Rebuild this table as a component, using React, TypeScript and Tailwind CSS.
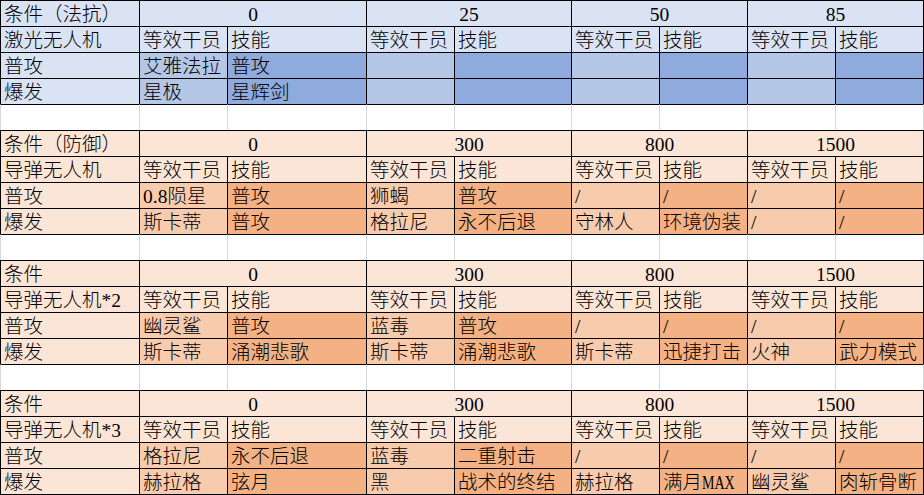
import React from "react";

type Theme = { l: string; m: string; d: string };

const BLUE: Theme = { l: "bg-[#dae3f3]", m: "bg-[#b4c7e7]", d: "bg-[#8faadc]" };
const ORANGE: Theme = { l: "bg-[#fbe5d6]", m: "bg-[#f8cbad]", d: "bg-[#f4b183]" };

type Block = {
  theme: Theme;
  title: string;
  thresholds: string[];
  unit: string;
  normal: string[];
  burst: string[];
};

const blocks: Block[] = [
  {
    theme: BLUE,
    title: "条件（法抗）",
    thresholds: ["0", "25", "50", "85"],
    unit: "激光无人机",
    normal: ["艾雅法拉", "普攻", "", "", "", "", "", ""],
    burst: ["星极", "星辉剑", "", "", "", "", "", ""],
  },
  {
    theme: ORANGE,
    title: "条件（防御）",
    thresholds: ["0", "300", "800", "1500"],
    unit: "导弹无人机",
    normal: ["0.8陨星", "普攻", "狮蝎", "普攻", "/", "/", "/", "/"],
    burst: ["斯卡蒂", "普攻", "格拉尼", "永不后退", "守林人", "环境伪装", "/", "/"],
  },
  {
    theme: ORANGE,
    title: "条件",
    thresholds: ["0", "300", "800", "1500"],
    unit: "导弹无人机*2",
    normal: ["幽灵鲨", "普攻", "蓝毒", "普攻", "/", "/", "/", "/"],
    burst: ["斯卡蒂", "涌潮悲歌", "斯卡蒂", "涌潮悲歌", "斯卡蒂", "迅捷打击", "火神", "武力模式"],
  },
  {
    theme: ORANGE,
    title: "条件",
    thresholds: ["0", "300", "800", "1500"],
    unit: "导弹无人机*3",
    normal: ["格拉尼", "永不后退", "蓝毒", "二重射击", "/", "/", "/", "/"],
    burst: ["赫拉格", "弦月", "黑", "战术的终结", "赫拉格", "满月MAX", "幽灵鲨", "肉斩骨断"],
  },
];

function Txt({ s }: { s: string }) {
  if (s.endsWith("MAX")) {
    return (
      <>
        {s.slice(0, -3)}
        <span className="inline-block w-[32px] origin-left scale-x-[0.72]">MAX</span>
      </>
    );
  }
  return <>{s}</>;
}

function Cell({
  children,
  bg,
  span2,
  center,
  last,
}: {
  children?: React.ReactNode;
  bg: string;
  span2?: boolean;
  center?: boolean;
  last?: boolean;
}) {
  return (
    <div
      className={`${bg} ${span2 ? "col-span-2" : ""} ${last ? "border-r" : ""} flex items-center ${
        center ? "justify-center" : "justify-start pl-[3px]"
      } overflow-hidden whitespace-nowrap border-l border-t border-black pt-[2px] leading-none`}
    >
      {children}
    </div>
  );
}

function EmptyRow() {
  return (
    <>
      {Array.from({ length: 9 }).map((_, i) => (
        <div
          key={i}
          className={`border-l border-t border-l-[#d6d6d6] border-t-black bg-white ${
            i === 8 ? "border-r border-r-[#d6d6d6]" : ""
          }`}
        />
      ))}
    </>
  );
}

function BlockRows({ b }: { b: Block }) {
  const t = b.theme;
  return (
    <>
      <Cell bg={t.l}>{b.title}</Cell>
      {b.thresholds.map((v, i) => (
        <Cell key={v + i} bg={t.l} span2 center last={i === 3}>
          {v}
        </Cell>
      ))}
      <Cell bg={t.l}>{b.unit}</Cell>
      {[0, 1, 2, 3].map((i) => (
        <React.Fragment key={i}>
          <Cell bg={t.l}>等效干员</Cell>
          <Cell bg={t.l} last={i === 3}>
            技能
          </Cell>
        </React.Fragment>
      ))}
      {[
        ["普攻", b.normal],
        ["爆发", b.burst],
      ].map(([label, vals]) => (
        <React.Fragment key={label as string}>
          <Cell bg={t.l}>{label as string}</Cell>
          {(vals as string[]).map((v, i) => (
            <Cell key={i} bg={i % 2 === 0 ? t.m : t.d} last={i === 7}>
              <Txt s={v} />
            </Cell>
          ))}
        </React.Fragment>
      ))}
    </>
  );
}

export default function App() {
  return (
    <div className="h-[495px] w-[924px] overflow-hidden bg-white">
      <div className="grid auto-rows-[26px] grid-cols-[139px_88px_139px_88px_117px_88px_88px_88px_89px] border-b border-black font-['Liberation_Serif','Noto_Sans_CJK_SC',serif] text-[19.5px] font-light text-black">
        {blocks.map((b, i) => (
          <React.Fragment key={i}>
            <BlockRows b={b} />
            {i < blocks.length - 1 && <EmptyRow />}
          </React.Fragment>
        ))}
      </div>
    </div>
  );
}
